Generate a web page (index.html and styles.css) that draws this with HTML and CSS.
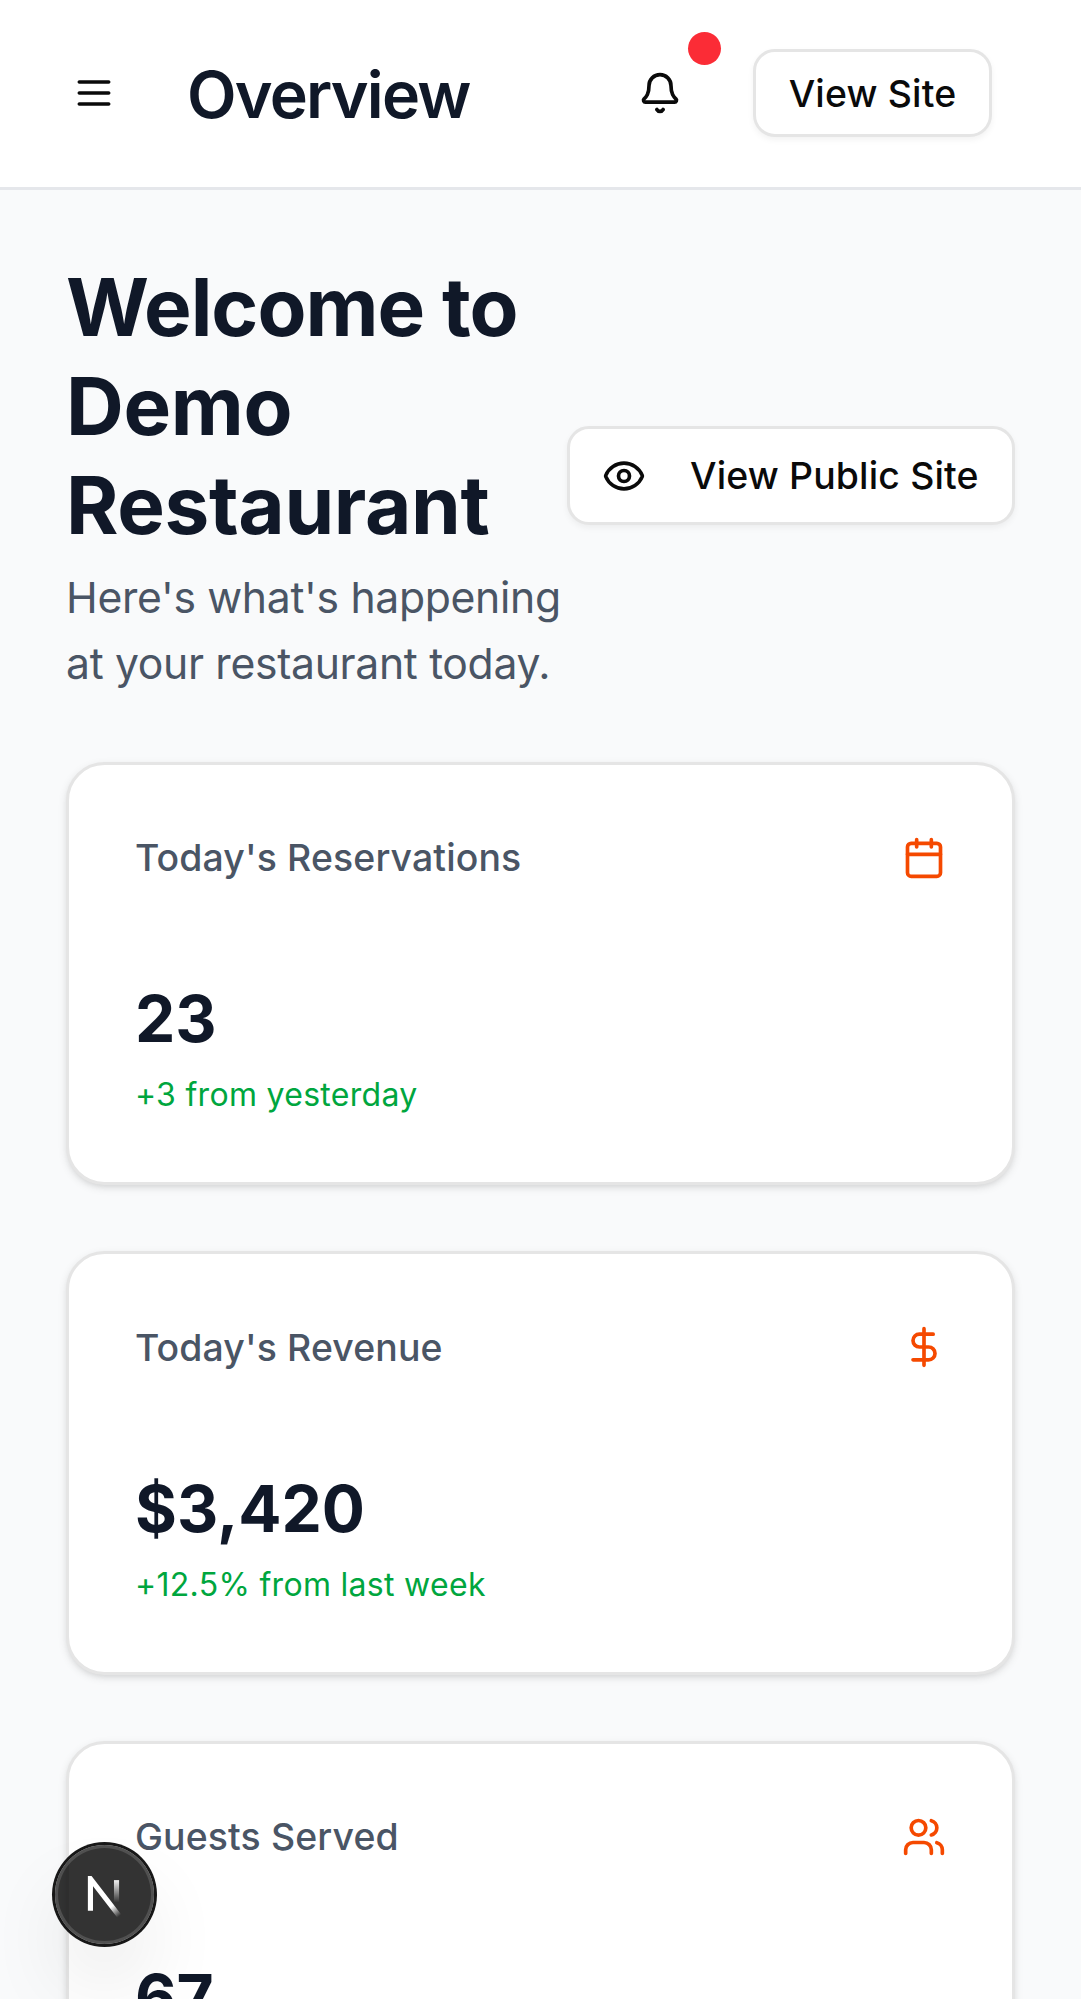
FILE: index.html
```html
<!DOCTYPE html>
<html lang="en">
<head>
<meta charset="utf-8">
<title>Overview</title>
<link rel="stylesheet" href="styles.css">
</head>
<body>
<header class="topbar">
  <button class="icon-button" aria-label="Menu">
    <svg class="icon" viewBox="0 0 24 24"><path d="M4 6h16M4 12h16M4 18h16"/></svg>
  </button>
  <h2 class="page-title">Overview</h2>
  <div class="actions">
    <button class="icon-button bell" aria-label="Notifications">
      <svg class="icon" viewBox="0 0 24 24"><path d="M10.268 21a2 2 0 0 0 3.464 0"/><path d="M3.262 15.326A1 1 0 0 0 4 17h16a1 1 0 0 0 .74-1.673C19.41 13.956 18 12.499 18 8A6 6 0 0 0 6 8c0 4.499-1.411 5.956-2.738 7.326"/></svg>
      <span class="dot"></span>
    </button>
    <button class="button button-sm"><span>View Site</span></button>
  </div>
</header>
<main class="content">
  <section class="welcome">
    <div class="welcome-text">
      <h1 class="heading"><span class="heading-lead">Welcome to</span><br>Demo<br>Restaurant</h1>
      <p class="lead">Here's what's happening<br>at your restaurant today.</p>
    </div>
    <button class="button button-md">
      <svg class="icon" viewBox="0 0 24 24"><path d="M2.062 12.348a1 1 0 0 1 0-.696 10.75 10.75 0 0 1 19.876 0 1 1 0 0 1 0 .696 10.75 10.75 0 0 1-19.876 0"/><circle cx="12" cy="12" r="3"/></svg>
      <span>View Public Site</span>
    </button>
  </section>
  <article class="card">
    <div class="card-head">
      <h3 class="card-title">Today's Reservations</h3>
      <svg class="icon accent" viewBox="0 0 24 24"><path d="M8 2v4M16 2v4M3 10h18"/><rect width="18" height="18" x="3" y="4" rx="2"/></svg>
    </div>
    <div class="value">23</div>
    <p class="change">+3 from yesterday</p>
  </article>
  <article class="card">
    <div class="card-head">
      <h3 class="card-title">Today's Revenue</h3>
      <svg class="icon accent" viewBox="0 0 24 24"><path d="M12 2v20M17 5H9.5a3.5 3.5 0 0 0 0 7h5a3.5 3.5 0 0 1 0 7H6"/></svg>
    </div>
    <div class="value">$3,420</div>
    <p class="change">+12.5% from last week</p>
  </article>
  <article class="card">
    <div class="card-head">
      <h3 class="card-title">Guests Served</h3>
      <svg class="icon accent" viewBox="0 0 24 24"><path d="M16 21v-2a4 4 0 0 0-4-4H6a4 4 0 0 0-4 4v2"/><circle cx="9" cy="7" r="4"/><path d="M22 21v-2a4 4 0 0 0-3-3.87M16 3.13a4 4 0 0 1 0 7.75"/></svg>
    </div>
    <div class="value">67</div>
  </article>
</main>
<div class="dev-badge">
  <svg class="dev-logo" viewBox="0 0 16 16">
    <defs>
      <linearGradient id="diagonal" x1="9.95" y1="11.13" x2="13.6" y2="15.4" gradientUnits="userSpaceOnUse"><stop stop-color="#fff"/><stop offset="0.8" stop-color="#fff" stop-opacity="0"/></linearGradient>
      <linearGradient id="upright" x1="11.8" y1="1" x2="11.8" y2="9.6" gradientUnits="userSpaceOnUse"><stop stop-color="#fff"/><stop offset="1" stop-color="#fff" stop-opacity="0"/></linearGradient>
    </defs>
    <path d="M13.3 15.2 2.34 1v11.6" stroke="url(#diagonal)"/>
    <path d="M11.825 1.5v11.6" stroke="url(#upright)"/>
  </svg>
</div>
</body>
</html>
```
FILE: styles.css
```css
* { box-sizing: border-box; margin: 0; padding: 0; }
body {
  height: 1999px;
  overflow: hidden;
  background: #f9fafb;
  color: #0a0a0a;
  font-family: Inter, "Liberation Sans", sans-serif;
}
h1, h2, h3, p { font-weight: inherit; }
button { font: inherit; color: inherit; background: none; border: 0; }
.icon {
  width: 44px;
  height: 44px;
  flex: none;
  display: block;
  fill: none;
  stroke: currentColor;
  stroke-width: 2;
  stroke-linecap: round;
  stroke-linejoin: round;
}
.topbar {
  display: flex;
  align-items: center;
  height: 190px;
  padding: 0 89px 1px 49.5px;
  background: #fff;
  border-bottom: 3px solid #e5e7eb;
}
.icon-button { position: relative; padding: 22px; }
.page-title {
  margin-left: 49.5px;
  padding-top: 3px;
  font-size: 64.5px;
  line-height: 88px;
  font-weight: 600;
  letter-spacing: -1.8px;
  color: #101828;
}
.actions { display: flex; align-items: center; gap: 49px; margin-left: auto; }
.dot {
  position: absolute;
  top: -17px;
  right: -17px;
  width: 33px;
  height: 33px;
  border-radius: 50%;
  background: #fb2c36;
}
.button {
  display: flex;
  align-items: center;
  flex: none;
  background: #fff;
  border: 3px solid #e5e5e5;
  border-radius: 22px;
  box-shadow: 0 3px 6px rgba(0, 0, 0, 0.05);
  font-size: 37.4px;
  font-weight: 500;
  letter-spacing: 0.16px;
  white-space: nowrap;
}
.button-sm { width: 239px; height: 88px; justify-content: center; }
.button-md { width: 448px; height: 99px; padding: 0 32px; gap: 44px; }
.content { padding: 65.5px 66px 66px; display: flex; flex-direction: column; gap: 66px; }
.welcome { display: flex; align-items: center; justify-content: space-between; height: 440px; }
.welcome-text { flex: none; width: 501px; padding-top: 3px; white-space: nowrap; }
.heading {
  font-size: 80px;
  line-height: 99px;
  font-weight: 700;
  letter-spacing: -0.35px;
  color: #101828;
}
.heading-lead { letter-spacing: -1px; }
.lead {
  margin-top: 11px;
  font-size: 42.7px;
  line-height: 66px;
  letter-spacing: -0.33px;
  color: #4a5565;
}
.card {
  flex: none;
  height: 423.5px;
  padding: 65.5px 66px;
  background: #fff;
  border: 3px solid #e5e5e5;
  border-radius: 38.5px;
  box-shadow: 0 3px 8px rgba(0, 0, 0, 0.1), 0 3px 6px -3px rgba(0, 0, 0, 0.1);
}
.card-head { display: flex; align-items: center; justify-content: space-between; height: 55px; }
.card-title {
  font-size: 37.4px;
  line-height: 55px;
  font-weight: 500;
  letter-spacing: 0.13px;
  color: #4a5565;
}
.accent { color: #f54900; }
.value { margin-top: 90px; font-size: 64px; line-height: 88px; font-weight: 700; color: #101828; }
.change { margin-top: 10px; font-size: 32px; line-height: 44px; letter-spacing: 0.3px; color: #00a63e; }
.dev-badge {
  position: fixed;
  left: 55px;
  top: 1845px;
  width: 99px;
  height: 99px;
  border-radius: 50%;
  background: rgba(0, 0, 0, 0.8);
  box-shadow: 0 0 0 3px #171717, inset 0 0 0 3px rgba(255, 255, 255, 0.14), 0 44px 88px -22px rgba(0, 0, 0, 0.24);
}
.dev-logo { display: block; width: 44px; height: 44px; margin: 30.5px 0 0 28.5px; fill: none; stroke-width: 1.86; }
```
